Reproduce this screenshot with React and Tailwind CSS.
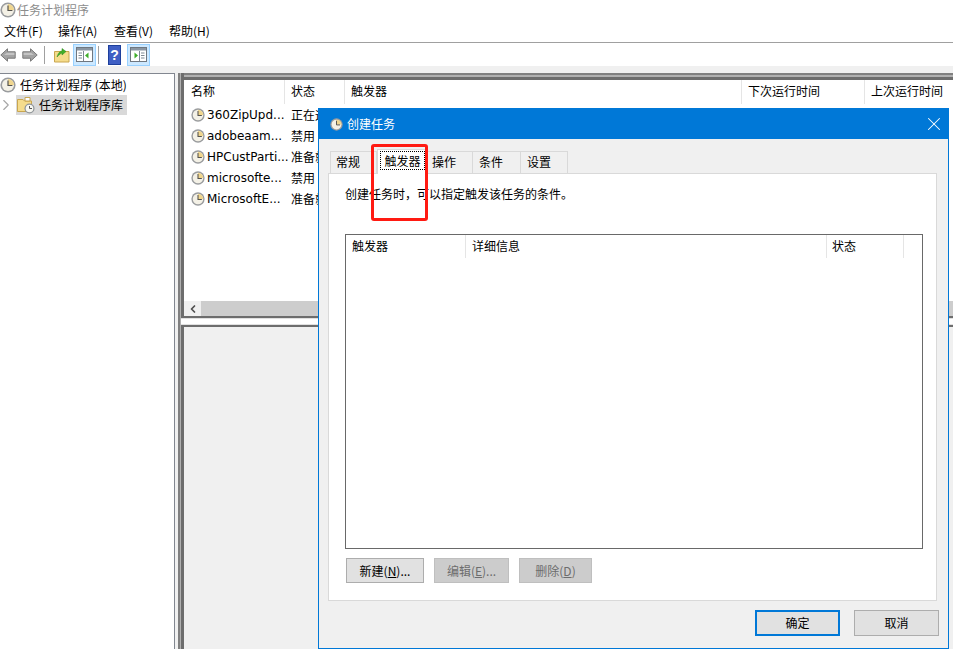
import { X, ChevronRight, ChevronLeft } from 'lucide-react';

const columns = [
  { label: '名称', width: 'w-[101px]', pad: 'pl-[7px]' },
  { label: '状态', width: 'w-[60px]', pad: 'pl-[6px]' },
  { label: '触发器', width: 'w-[397px]', pad: 'pl-[6px]' },
  { label: '下次运行时间', width: 'w-[123px]', pad: 'pl-[6px]' },
  { label: '上次运行时间', width: 'w-[120px]', pad: 'pl-[6px]' },
];

const tasks = [
  { name: '360ZipUpd...', status: '正在运行', last: '2021/11/18' },
  { name: 'adobeaam...', status: '禁用', last: '2021/11/18' },
  { name: 'HPCustParti...', status: '准备就绪', last: '2021/11/18' },
  { name: 'microsofte...', status: '禁用', last: '2021/11/18' },
  { name: 'MicrosoftE...', status: '准备就绪', last: '2021/11/18' },
];

const tabs = [
  { label: '常规', width: 'w-[47px] pl-[5px] border-l' },
  { label: '触发器', width: 'w-[51px]', active: true },
  { label: '操作', width: 'w-[45px] pl-[4px]' },
  { label: '条件', width: 'w-[48px] pl-[6px]' },
  { label: '设置', width: 'w-[47px] pl-[6px]' },
];

function ClockIcon({ size = 14 }) {
  return (
    <svg width={size} height={size} viewBox="0 0 16 16" className="shrink-0">
      <circle cx="8" cy="8" r="7.6" fill="#9a9c9e" />
      <circle cx="8" cy="8" r="6" fill="#f4f1e6" />
      <path d="M8 8V2A6 6 0 0 1 14 8Z" fill="#f0d68e" />
      <path d="M8 3.4V8.5H12.4" fill="none" stroke="#55534e" strokeWidth="1.2" />
    </svg>
  );
}

function FolderClockIcon() {
  return (
    <svg width="18" height="18" viewBox="0 0 18 18" className="shrink-0">
      <path d="M0.5 3.5H6L7.5 5H14.5V15.5H0.5Z" fill="#f5dc8c" stroke="#c9a64f" />
      <path d="M8 1.5H13V5H8Z" fill="#fff" stroke="#c9a64f" />
      <circle cx="12.5" cy="12.5" r="5" fill="#8f9498" />
      <circle cx="12.5" cy="12.5" r="3.8" fill="#f8f8f2" />
      <path d="M12.5 10V12.5H15" fill="none" stroke="#555" />
    </svg>
  );
}

function NavArrow({ flip }) {
  return (
    <svg width="16" height="14" viewBox="0 0 16 14" className={flip ? 'shrink-0 -scale-x-100' : 'shrink-0'}>
      <path d="M7.5 0.8L0.8 7L7.5 13.2V10.2H15.2V3.8H7.5Z" fill="#a3a3a3" stroke="#7a7a7a" />
      <path d="M7 4.8H14.4V7H4Z" fill="#c4c4c4" />
    </svg>
  );
}

function PaneIcon({ flip }) {
  return (
    <svg width="17" height="15" viewBox="0 0 17 15" className={flip ? 'shrink-0 -scale-x-100' : 'shrink-0'}>
      <rect x="0.5" y="0.5" width="16" height="14" fill="#fff" stroke="#6f7780" />
      <rect x="1" y="1" width="15" height="2.5" fill="#8a96a3" />
      <path d="M2.5 6H6M2.5 8.5H6M2.5 11H6M7.5 4V14" stroke="#7e8994" />
      <path d="M12.5 5.5L9 8.5L12.5 11.5Z" fill="#3fae29" />
    </svg>
  );
}

function ToggleButton({ flip }) {
  return (
    <div className="flex h-[22px] w-[23px] items-center justify-center border border-[#99d1ff] bg-[#cce8ff]">
      <PaneIcon flip={flip} />
    </div>
  );
}

function DialogButton({ children, disabled, className }) {
  return (
    <button
      className={`flex h-[25px] items-center justify-center border text-xs ${
        disabled ? 'border-[#bfbfbf] bg-[#cccccc] text-[#6d6d6d]' : 'border-[#adadad] bg-[#e1e1e1] text-black'
      } ${className}`}
    >
      {children}
    </button>
  );
}

export default function App() {
  return (
    <div className="relative flex h-[649px] w-[953px] flex-col overflow-hidden bg-white font-['Noto_Sans_CJK_SC','Noto_Sans',sans-serif] text-xs text-black">
      <div className="flex h-[20px] items-center gap-[1px] text-[#8c8c8c]">
        <ClockIcon size={16} />
        <span>任务计划程序</span>
      </div>

      <div className="flex h-[23px] items-center border-b border-[#a0a0a0] pl-[4px]">
        <span className="w-[54px]">文件(F)</span>
        <span className="w-[56px]">操作(A)</span>
        <span className="w-[55px]">查看(V)</span>
        <span>帮助(H)</span>
      </div>

      <div className="flex h-[23px] items-center bg-white">
        <NavArrow />
        <div className="w-[6px]" />
        <NavArrow flip />
        <div className="mx-[6px] h-[18px] w-px bg-[#a0a0a0]" />
        <svg width="16" height="16" viewBox="0 0 16 16" className="ml-[3px] mr-[3px] shrink-0">
          <path d="M0.5 4.5H15V15H0.5Z" fill="#f5dc8c" stroke="#c9a64f" />
          <path d="M3 10C4 6 6 4 8 4V1.5L12 4.5L8 8V6C6.5 6.5 5 8 3 10Z" fill="#3fae29" stroke="#2b8a1c" strokeWidth="0.5" />
        </svg>
        <ToggleButton />
        <div className="mx-[2px] h-[18px] w-px bg-[#a0a0a0]" />
        <div className="ml-[7px] mr-[6px] flex h-[20px] w-[13px] items-center justify-center border border-[#1d3f9c] bg-[#3f5fc4] font-['Liberation_Sans',sans-serif] text-sm font-bold leading-none text-white">
          ?
        </div>
        <ToggleButton flip />
      </div>

      <div className="h-[7px] bg-[#f0f0f0]" />

      <div className="flex min-h-0 flex-1 bg-[#f0f0f0]">
        <div className="w-[175px] shrink-0 border-r border-t border-[#828790] bg-white">
          <div className="flex h-[21px] items-center gap-[4px] pt-[1px]">
            <ClockIcon size={16} />
            <span>任务计划程序 (本地)</span>
          </div>
          <div className="flex h-[20px] items-center">
            <ChevronRight size={18} strokeWidth={1.5} className="-ml-[3px] mr-[1px] shrink-0 text-[#a6a6a6]" />
            <div className="flex h-[20px] w-[111px] items-center gap-[4px] bg-[#d9d9d9] pl-[1px]">
              <FolderClockIcon />
              <span>任务计划程序库</span>
            </div>
          </div>
        </div>

        {/* sash stripes run the full height of the right side */}
        <div className="ml-[3px] flex min-w-0 flex-1 border-l-2 border-[#808080] bg-[#b0b0b0] pl-[1px]">
          <div className="flex min-w-0 flex-1 flex-col border-l-[3px] border-[#6d6d6d]">
            <div className="flex h-[243px] flex-col border-t-[2px] border-[#808080] bg-[#b0b0b0] pt-[2px]">
              <div className="flex min-h-0 flex-1 flex-col border-t-[3px] border-[#6d6d6d] bg-white">
                <div className="flex h-[24px] shrink-0">
                  {columns.map((col) => (
                    <div key={col.label} className={`flex shrink-0 items-center border-r border-[#e5e5e5] pb-[2px] ${col.width} ${col.pad}`}>
                      {col.label}
                    </div>
                  ))}
                </div>
                <div className="min-h-0 flex-1">
                  {tasks.map((task) => (
                    <div key={task.name} className="flex h-[21px] items-center">
                      <div className="flex w-[101px] shrink-0 items-center gap-[2px] pl-[7px]">
                        <ClockIcon size={14} />
                        <span className="font-['DejaVu_Sans',sans-serif]">{task.name}</span>
                      </div>
                      <div className="w-[60px] shrink-0 pl-[6px]">{task.status}</div>
                      <div className="w-[520px] shrink-0" />
                      <div className="whitespace-nowrap pl-[6px]">{task.last}</div>
                    </div>
                  ))}
                </div>
                <div className="flex h-[15px] shrink-0 bg-[#cdcdcd]">
                  <div className="flex w-[17px] items-center justify-center bg-[#f0f0f0]">
                    <ChevronLeft size={12} strokeWidth={3.5} className="text-[#505050]" />
                  </div>
                </div>
              </div>
            </div>
            <div className="h-[2px] bg-[#6d6d6d]" />
            <div className="-ml-[3px] h-[7px] border-y border-[#e0e0e0] bg-white" />
            <div className="flex-1 border-t-2 border-[#6d6d6d] bg-[#f0f0f0]" />
          </div>
        </div>
      </div>

      {/* dialog floats over the main window */}
      <div className="absolute left-[318px] top-[108px] flex h-[541px] w-[631px] flex-col border border-[#0078d7] bg-[#f0f0f0]">
        <div className="flex h-[30px] shrink-0 items-center bg-[#0078d7] pl-[11px] pr-[3px] text-white">
          <ClockIcon size={13} />
          <span className="ml-[4px] flex-1">创建任务</span>
          <X size={22} strokeWidth={1.1} className="text-white" />
        </div>

        <div className="flex h-[34px] shrink-0 items-end pl-[11px]">
          {tabs.map((tab) =>
            tab.active ? (
              <div key={tab.label} className={`relative z-10 -mb-px flex h-[25px] items-center justify-center border-x border-t border-[#d9d9d9] bg-white pb-[3px] ${tab.width}`}>
                <span className="border border-dotted border-black px-[3px] leading-[17px]">{tab.label}</span>
              </div>
            ) : (
              <div key={tab.label} className={`flex h-[22px] items-center border-r border-t border-[#d9d9d9] bg-[#f0f0f0] pb-[2px] ${tab.width}`}>
                {tab.label}
              </div>
            )
          )}
        </div>

        <div className="ml-[9px] flex h-[428px] w-[609px] flex-col border border-[#d9d9d9] bg-white px-[16px] pt-[12px]">
          <p className="h-[48px] leading-[16px]">创建任务时，可以指定触发该任务的条件。</p>
          <div className="h-[315px] w-[578px] border border-[#696969]">
            <div className="flex h-[23px]">
              <div className="flex w-[120px] items-center border-r border-[#e5e5e5] pb-[1px] pl-[6px]">触发器</div>
              <div className="flex w-[361px] items-center border-r border-[#e5e5e5] pb-[1px] pl-[6px]">详细信息</div>
              <div className="flex w-[77px] items-center border-r border-[#e5e5e5] pb-[1px] pl-[5px]">状态</div>
            </div>
          </div>
          <div className="mt-[9px] flex pl-px">
            <DialogButton className="w-[78px]">
              新建(<span className="underline">N</span>)...
            </DialogButton>
            <DialogButton disabled className="ml-[10px] w-[75px]">
              编辑(<span className="underline">E</span>)...
            </DialogButton>
            <DialogButton disabled className="ml-[10px] w-[73px]">
              删除(<span className="underline">D</span>)
            </DialogButton>
          </div>
        </div>

        <div className="flex flex-1 items-start justify-end gap-[14px] pr-[9px] pt-[9px]">
          <button className="h-[26px] w-[85px] border-2 border-[#0078d7] bg-[#e1e1e1] text-xs">确定</button>
          <button className="h-[26px] w-[85px] border border-[#adadad] bg-[#e1e1e1] text-xs">取消</button>
        </div>
      </div>

      {/* red annotation drawn on the screenshot */}
      <div className="absolute left-[371px] top-[144px] z-20 h-[77px] w-[57px] rounded-[3px] border-[3px] border-[#ff1a12]" />
    </div>
  );
}
